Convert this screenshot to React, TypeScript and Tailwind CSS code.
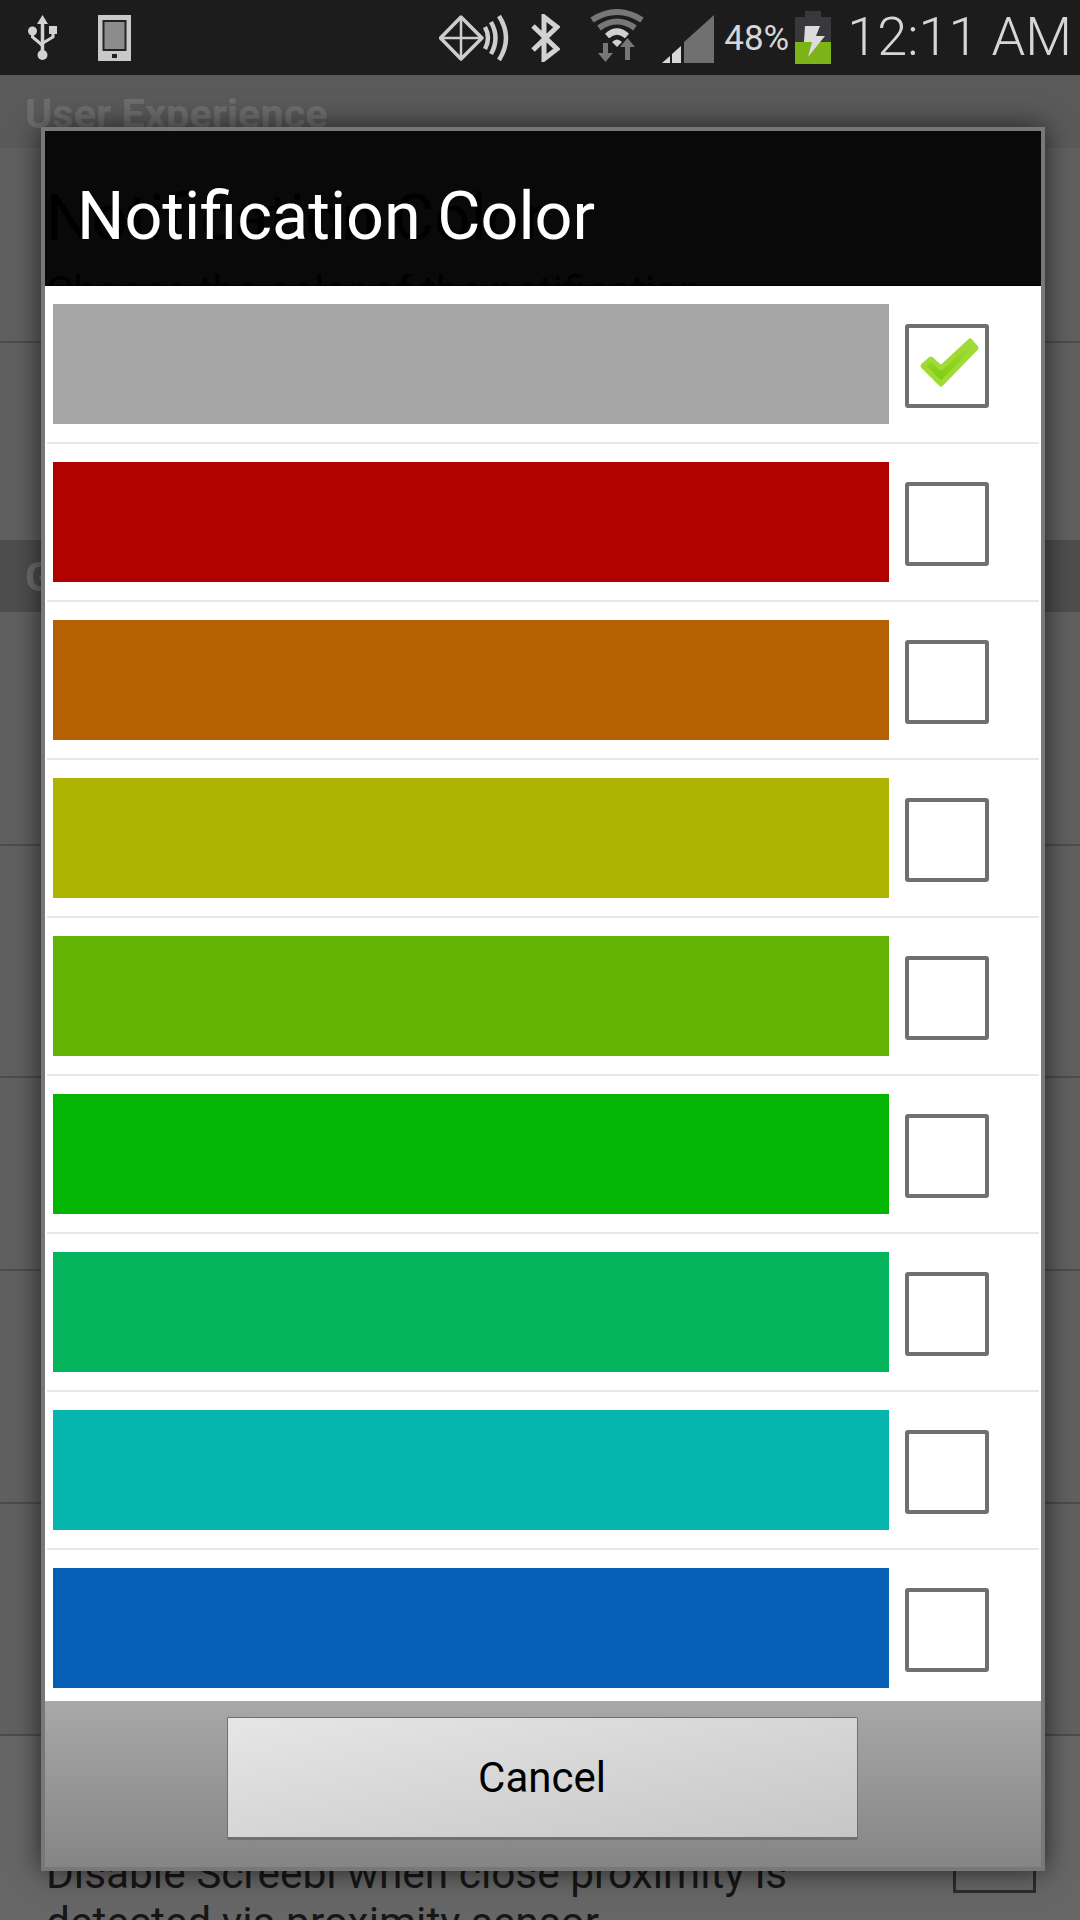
const swatches = [
  "bg-[#a6a6a6]",
  "bg-[#b10200]",
  "bg-[#b56002]",
  "bg-[#adb502]",
  "bg-[#62b303]",
  "bg-[#04b504]",
  "bg-[#05b55d]",
  "bg-[#05b5ae]",
  "bg-[#055fb5]",
];

function UsbIcon() {
  return (
    <svg width="29" height="46" viewBox="0 0 29 46" fill="none">
      <path d="M14.5 0 L20 9 H9 Z" fill="#d2d2d2" />
      <path d="M14.5 6 V40" stroke="#d2d2d2" strokeWidth="3.5" />
      <circle cx="14.5" cy="40" r="5" fill="#d2d2d2" />
      <circle cx="4.5" cy="16" r="4.5" fill="#d2d2d2" />
      <rect x="21" y="11" width="8" height="8" fill="#d2d2d2" />
      <path d="M4.5 18 V22 L14 30 M25 18 V22 L15 28" stroke="#d2d2d2" strokeWidth="3" />
    </svg>
  );
}

function TabletIcon() {
  return (
    <svg width="33" height="46" viewBox="0 0 33 46">
      <rect width="33" height="46" fill="#c9c9c9" />
      <rect x="5.5" y="6" width="22" height="29" fill="#8c8c8c" stroke="#222" strokeWidth="2" />
      <rect x="14" y="39" width="5" height="4" fill="#222" />
    </svg>
  );
}

function NfcIcon() {
  return (
    <svg width="70" height="46" viewBox="0 0 70 46" fill="none" stroke="#cdcdcd">
      <path d="M22 2 L43 23 L22 44 L1.5 23 Z" strokeWidth="3.5" strokeLinejoin="round" />
      <path d="M22 2 V44 M2 23 H43" strokeWidth="2.5" />
      <path d="M46 12 Q52 23 46 34" strokeWidth="4.5" />
      <path d="M52 7 Q61 23 52 39" strokeWidth="4.5" />
      <path d="M60 1 Q74 23 60 45" strokeWidth="4.5" />
    </svg>
  );
}

function BluetoothIcon() {
  return (
    <svg width="29" height="48" viewBox="0 0 29 48" fill="none">
      <path d="M2 12 L26 35 L13 45 V3 L26 13 L2 36" stroke="#d2d2d2" strokeWidth="5" />
    </svg>
  );
}

function WifiIcon() {
  return (
    <svg width="54" height="54" viewBox="0 0 54 54" fill="none">
      <path d="M2 11 Q27 -5 52 11" stroke="#777" strokeWidth="6" />
      <path d="M9 19 Q27 6 45 19" stroke="#777" strokeWidth="6" />
      <path d="M17 27 Q27 18 37 27" stroke="#d0d0d0" strokeWidth="6" />
      <path d="M22 33 Q27 28 32 33 L27 38 Z" fill="#d0d0d0" />
      <path d="M18 34 V44 H23 L15.5 53 L8 44 H13 V34 Z" fill="#777" />
      <path d="M36 53 V40 H41 L33.5 31 L26 40 H31 V53 Z" fill="#777" transform="translate(4 -2)" />
    </svg>
  );
}

function SignalIcon() {
  return (
    <svg width="52" height="48" viewBox="0 0 52 48">
      <path d="M0 48 L8 41 V48 Z" fill="#d8d8d8" />
      <path d="M10 39 L19 31 V48 H10 Z" fill="#d8d8d8" />
      <path d="M22 27 L52 0 V48 H22 Z" fill="#707070" />
    </svg>
  );
}

function BatteryIcon() {
  return (
    <svg width="36" height="53" viewBox="0 0 36 53">
      <rect x="10" width="16" height="6" fill="#383838" />
      <rect y="6" width="36" height="25" fill="#38383d" />
      <rect y="31" width="36" height="22" fill="#7cb316" />
      <path d="M10 15 H25 L21 25 H30 L13 46 L17 31 H9 Z" fill="#dcdcdc" />
    </svg>
  );
}

function CheckMark() {
  return (
    <svg width="76" height="76" viewBox="0 0 76 76" fill="none">
      <defs>
        <linearGradient id="check" x1="0" y1="0" x2="0" y2="1">
          <stop offset="0" stopColor="#a5dc3c" />
          <stop offset="1" stopColor="#78cc08" />
        </linearGradient>
      </defs>
      <path
        d="M14 38 L22 31 L32 40 L61 13 L67 20 L32 56 Z"
        fill="url(#check)"
        stroke="#a0da34"
        strokeWidth="5"
        strokeLinejoin="round"
      />
    </svg>
  );
}

function StatusBar() {
  return (
    <div className="flex h-[75px] items-center bg-[#1c1c1c] pl-[28px] pr-[8px]">
      <UsbIcon />
      <div className="ml-[41px]">
        <TabletIcon />
      </div>
      <div className="ml-auto flex items-center">
        <NfcIcon />
        <div className="ml-[22px]">
          <BluetoothIcon />
        </div>
        <div className="ml-[30px] mt-[-3px]">
          <WifiIcon />
        </div>
        <div className="ml-[18px] mt-[3px]">
          <SignalIcon />
        </div>
        <span className="ml-[10px] mt-[2px] text-[35px] leading-none text-[#d6d6d6]">48%</span>
        <div className="ml-[6px]">
          <BatteryIcon />
        </div>
        <span className="ml-[16px] mt-[-2px] text-[54px] font-light leading-none text-[#d6d6d6]">12:11 AM</span>
      </div>
    </div>
  );
}

function SectionHeader({ title, className }: { title: string; className: string }) {
  return (
    <div className={`pl-[25px] text-[41.5px] font-bold leading-[42px] text-[#6e6e6e] ${className}`}>{title}</div>
  );
}

function Background() {
  return (
    <div className="bg-[#606060]">
      <SectionHeader title="User Experience" className="h-[73px] bg-[#5a5a5a] pt-[18px]" />
      <div className="h-[195px] border-b-2 border-[#4c4c4c] pl-[46px] pt-[33px] text-[#020202]">
        <div className="text-[64px] leading-[76px]">Notification Color</div>
        <div className="mt-[11px] text-[42px] leading-[48px]">Choose the color of the notification</div>
      </div>
      <div className="h-[197px]" />
      <SectionHeader title="General" className="h-[72px] bg-[#4e4e4e] pt-[16px]" />
      <div className="h-[234px] border-b-2 border-[#4c4c4c]" />
      <div className="h-[232px] border-b-2 border-[#4c4c4c]" />
      <div className="h-[193px] border-b-2 border-[#4c4c4c]" />
      <div className="h-[233px] border-b-2 border-[#4c4c4c]" />
      <div className="h-[232px] border-b-2 border-[#4c4c4c]" />
      <div className="flex h-[184px] bg-[#666666] pl-[46px] pr-[44px] pt-[113px]">
        <div className="text-[42.4px] leading-[49px] text-[#161616]">
          Disable Screebl when close proximity is
          <br />
          detected via proximity sensor
        </div>
        <div className="ml-auto mt-[-39px] h-[83px] w-[83px] shrink-0 border-[3px] border-[#2c2c2c]" />
      </div>
    </div>
  );
}

function Dialog() {
  return (
    <div className="absolute left-[41px] top-[127px] flex h-[1744px] w-[1004px] flex-col border-4 border-[#787878] shadow-[0_0_26px_rgba(0,0,0,0.65)]">
      <div className="h-[154px] shrink-0 bg-black/90 pl-[32px] pt-[47px] text-[66.5px] leading-[76px] text-white">
        Notification Color
      </div>
      <div className="h-px shrink-0 bg-black" />
      <div className="h-[1415px] shrink-0 overflow-hidden bg-white">
        {swatches.map((swatch, i) => (
          <div key={swatch} className="h-[158px]">
            <div className="flex h-[156px] items-center pl-[8px]">
              <div className={`h-[120px] w-[836px] ${swatch}`} />
              <div className="ml-[16px] mt-[3px] flex h-[84px] w-[84px] items-center justify-center rounded-[3px] border-4 border-[#707070]">
                {i === 0 && <CheckMark />}
              </div>
            </div>
            {i < swatches.length - 1 && <div className="mx-[2px] h-[2px] bg-[#e8e8e8]" />}
          </div>
        ))}
      </div>
      <div className="flex flex-1 items-start justify-center bg-gradient-to-b from-[#a8a8a8] to-[#858585] pr-[2px] pt-[16px]">
        <button className="h-[123px] w-[631px] rounded-[2px] border border-b-[3px] border-[#707070] bg-gradient-to-br from-[#e6e6e6] to-[#c6c6c6] text-[42px] text-black">
          Cancel
        </button>
      </div>
    </div>
  );
}

export default function App() {
  return (
    <div className="relative h-[1920px] w-[1080px] overflow-hidden font-['Roboto',sans-serif]">
      <StatusBar />
      <Background />
      <Dialog />
    </div>
  );
}
